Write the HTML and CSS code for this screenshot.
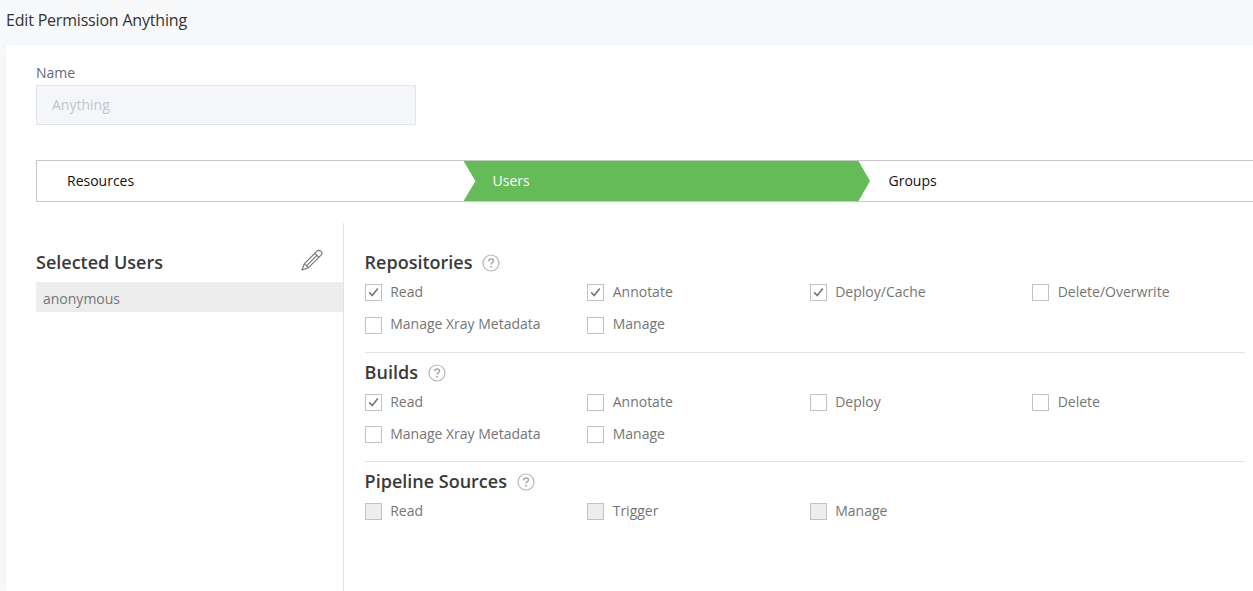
FILE: index.html
```html
<!DOCTYPE html>
<html lang="en">
<head>
<meta charset="utf-8">
<title>Edit Permission Anything</title>
<link rel="stylesheet" href="styles.css">
</head>
<body>
<svg width="0" height="0" class="defs">
  <symbol id="help" viewBox="0 0 18 18"><circle cx="9" cy="9" r="8" fill="none" stroke="#b5b5b5" stroke-width="1.2"/><path d="M6.600 7.200C6.600 5.700 7.600 4.900 9.100 4.900s2.400.8 2.400 2.100c0 1.700-2.400 1.700-2.400 3.500" fill="none" stroke="#a8a8a8" stroke-width="1.500"/><circle cx="9.100" cy="12.700" r="1" fill="#a8a8a8"/></symbol>
  <symbol id="check" viewBox="0 0 15 15"><path d="M3.200 7.400 6.200 10.500 11.800 3.400" fill="none" stroke="#777" stroke-width="1.600"/></symbol>
</svg>
<h1 class="page-title">Edit Permission Anything</h1>
<main class="panel">
  <label class="name-label">Name</label>
  <div class="name-input">Anything</div>
  <nav class="steps">
    <div class="step first">Resources</div>
    <div class="step active">Users</div>
    <div class="step last">Groups</div>
  </nav>
  <div class="body">
    <aside class="users">
      <div class="users-head">
        <h2>Selected Users</h2>
        <svg class="pencil" viewBox="0 0 22 22"><g fill="none" stroke="#757575" stroke-width="1.150" stroke-linejoin="round"><path d="M1 21 3.300 14.800 15.800 2.300Q17.900.400 19.900 2.100T20.100 6.200L7.500 18.700Z"/><path d="M3.300 14.800 7.500 18.700M13.800 4.300 18 8.300M6 16.300 15.900 6.400"/></g></svg>
      </div>
      <div class="user">anonymous</div>
    </aside>
    <div class="permissions">
      <section class="group">
        <div class="group-head"><h2>Repositories</h2><svg class="help"><use href="#help"/></svg></div>
        <div class="options">
          <label class="option"><span class="box"><svg><use href="#check"/></svg></span><span class="text">Read</span></label>
          <label class="option"><span class="box"><svg><use href="#check"/></svg></span><span class="text">Annotate</span></label>
          <label class="option"><span class="box"><svg><use href="#check"/></svg></span><span class="text">Deploy/Cache</span></label>
          <label class="option"><span class="box"></span><span class="text">Delete/Overwrite</span></label>
          <label class="option"><span class="box"></span><span class="text">Manage Xray Metadata</span></label>
          <label class="option"><span class="box"></span><span class="text">Manage</span></label>
        </div>
      </section>
      <section class="group">
        <div class="group-head"><h2>Builds</h2><svg class="help"><use href="#help"/></svg></div>
        <div class="options">
          <label class="option"><span class="box"><svg><use href="#check"/></svg></span><span class="text">Read</span></label>
          <label class="option"><span class="box"></span><span class="text">Annotate</span></label>
          <label class="option"><span class="box"></span><span class="text">Deploy</span></label>
          <label class="option"><span class="box"></span><span class="text">Delete</span></label>
          <label class="option"><span class="box"></span><span class="text">Manage Xray Metadata</span></label>
          <label class="option"><span class="box"></span><span class="text">Manage</span></label>
        </div>
      </section>
      <section class="group">
        <div class="group-head"><h2>Pipeline Sources</h2><svg class="help"><use href="#help"/></svg></div>
        <div class="options">
          <label class="option"><span class="box disabled"></span><span class="text">Read</span></label>
          <label class="option"><span class="box disabled"></span><span class="text">Trigger</span></label>
          <label class="option"><span class="box disabled"></span><span class="text">Manage</span></label>
        </div>
      </section>
    </div>
  </div>
</main>
</body>
</html>
```
FILE: styles.css
```css
* { box-sizing: border-box; }
body {
  margin: 0;
  height: 591px;
  overflow: hidden;
  display: flex;
  flex-direction: column;
  background: #f8f9fb;
  font: 14px/20px "Open Sans", sans-serif;
  color: #757575;
}
.defs { display: none; }
h1, h2 { margin: 0; }
.page-title {
  height: 45px;
  padding: 8px 6px 0;
  font-size: 16px;
  line-height: 24px;
  font-weight: 400;
  letter-spacing: -.19px;
  color: #333;
}
.panel {
  flex: 1;
  min-height: 0;
  display: flex;
  flex-direction: column;
  margin-left: 6px;
  padding: 18px 0 0 30px;
  background: #fff;
  box-shadow: 0 0 8px rgba(0, 0, 0, .04);
}
.name-label { height: 22px; color: #5f697d; }
.name-input {
  flex: none;
  width: 380px;
  height: 40px;
  padding: 0 15px;
  line-height: 38px;
  border: 1px solid #e2e6ec;
  background: #f5f6fa;
  color: #c3c5c9;
}
.steps {
  flex: none;
  display: flex;
  height: 42px;
  margin-top: 35px;
  border: 1px solid #c8c8c8;
  border-right: 0;
  line-height: 40px;
  color: #111;
}
.step.first { width: 426.500px; padding-left: 30px; }
.step.active {
  width: 406.500px;
  padding-left: 29px;
  background: #66bb59;
  color: #fff;
  clip-path: polygon(0 0, 395px 0, 100% 50%, 395px 100%, 0 100%, 12px 50%);
}
.step.last { padding-left: 18.500px; }
.body { flex: 1; min-height: 0; display: flex; margin-top: 21px; }
.users { width: 308px; border-right: 1px solid #e3e3e3; }
.users-head {
  display: flex;
  justify-content: space-between;
  height: 59px;
  padding: 26px 20px 0 0;
}
h2 {
  font-size: 18px;
  line-height: 26px;
  font-weight: 600;
  color: #3a3a3a;
}
.pencil { width: 22px; height: 22px; }
.user { height: 30px; padding-left: 7px; line-height: 34px; background: #ededed; }
.permissions { flex: 1; min-width: 0; padding: 20.400px 8px 0 20.600px; }
.group { height: 109.400px; border-bottom: 1px solid #e3e3e3; }
.group:last-child { border: 0; }
.group-head { display: flex; height: 41px; padding-top: 6px; gap: 10px; }
.help { width: 18px; height: 18px; margin-top: 5px; }
.options {
  display: grid;
  grid-template-columns: repeat(4, 222.500px);
  grid-auto-rows: 32.200px;
}
.option { display: flex; gap: 8.600px; white-space: nowrap; }
.box { flex: none; width: 17px; height: 17px; border: 1px solid #c2c2c2; }
.box svg { display: block; width: 15px; height: 15px; }
.disabled { background: #ededed; }
.text { margin-top: -2.200px; }
```
